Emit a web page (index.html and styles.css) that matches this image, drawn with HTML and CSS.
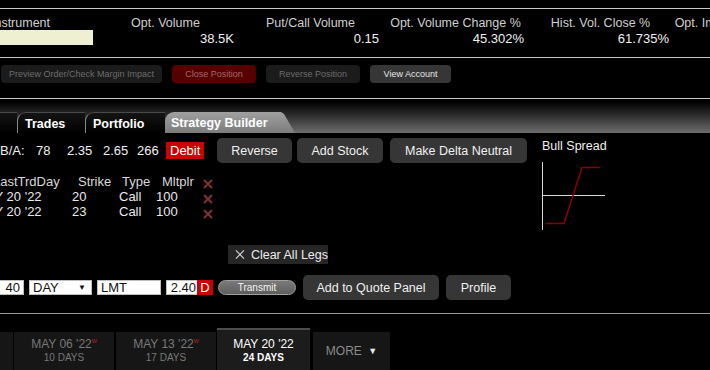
FILE: index.html
```html
<!DOCTYPE html>
<html lang="en">
<head>
    <meta charset="UTF-8">
    <meta name="viewport" content="width=device-width, initial-scale=1.0">
    <title>Strategy Builder</title>
    <link rel="stylesheet" href="styles.css">
</head>
<body>
<div class="page">

    <div class="rule first-rule"></div>

    <div class="stats">
        <div class="stat stat-first">
            <div class="stat-label">Instrument</div>
            <div class="instrument-box"></div>
        </div>
        <div class="stat">
            <div class="stat-label">Opt. Volume</div>
            <div class="stat-value">38.5K</div>
        </div>
        <div class="stat">
            <div class="stat-label">Put/Call Volume</div>
            <div class="stat-value">0.15</div>
        </div>
        <div class="stat">
            <div class="stat-label">Opt. Volume Change %</div>
            <div class="stat-value">45.302%</div>
        </div>
        <div class="stat">
            <div class="stat-label">Hist. Vol. Close %</div>
            <div class="stat-value">61.735%</div>
        </div>
        <div class="stat">
            <div class="stat-label">Opt. Implied Vol. Close %</div>
            <div class="stat-value"></div>
        </div>
    </div>

    <div class="rule"></div>

    <div class="actions">
        <button class="act-btn act-preview">Preview Order/Check Margin Impact</button>
        <button class="act-btn act-close">Close Position</button>
        <button class="act-btn act-reverse">Reverse Position</button>
        <button class="act-btn act-account">View Account</button>
    </div>

    <div class="rule"></div>

    <div class="tabbar">
        <div class="tab tab-stub"></div>
        <div class="tab tab-trades">Trades</div>
        <div class="tab tab-portfolio">Portfolio</div>
        <div class="tab tab-active">Strategy Builder</div>
    </div>

    <div class="builder">
        <div class="builder-main">

            <div class="summary-row">
                <div class="quote-line">
                    <span class="q q-label">B/A:</span>
                    <span class="q q-size">78</span>
                    <span class="q q-bid">2.35</span>
                    <span class="q q-ask">2.65</span>
                    <span class="q q-ask-size">266</span>
                    <span class="debit">Debit</span>
                </div>
                <button class="btn btn-reverse">Reverse</button>
                <button class="btn btn-stock">Add Stock</button>
                <button class="btn btn-delta">Make Delta Neutral</button>
            </div>

            <div class="legs">
                <div class="leg leg-head">
                    <span class="c-day">LastTrdDay</span>
                    <span class="c-strike">Strike</span>
                    <span class="c-type">Type</span>
                    <span class="c-mult">Mltplr</span>
                    <span class="c-x"><svg width="10" height="10" viewBox="0 0 10 10"><path d="M1 1 L9 9 M9 1 L1 9" stroke="#7e3434" stroke-width="2"/></svg></span>
                </div>
                <div class="leg">
                    <span class="c-day">MAY 20 '22</span>
                    <span class="c-strike">20</span>
                    <span class="c-type">Call</span>
                    <span class="c-mult">100</span>
                    <span class="c-x"><svg width="10" height="10" viewBox="0 0 10 10"><path d="M1 1 L9 9 M9 1 L1 9" stroke="#7e3434" stroke-width="2"/></svg></span>
                </div>
                <div class="leg">
                    <span class="c-day">MAY 20 '22</span>
                    <span class="c-strike">23</span>
                    <span class="c-type">Call</span>
                    <span class="c-mult">100</span>
                    <span class="c-x"><svg width="10" height="10" viewBox="0 0 10 10"><path d="M1 1 L9 9 M9 1 L1 9" stroke="#7e3434" stroke-width="2"/></svg></span>
                </div>
            </div>

            <div class="clear-row">
                <button class="clear-btn">
                    <svg width="11" height="11" viewBox="0 0 11 11"><path d="M1 1 L10 10 M10 1 L1 10" stroke="#d0d0d0" stroke-width="1.3"/></svg>
                    <span>Clear All Legs</span>
                </button>
            </div>

            <div class="order-row">
                <div class="field f-qty">40</div>
                <div class="field f-tif">DAY<span class="caret">&#9660;</span></div>
                <div class="field f-type">LMT</div>
                <div class="price">
                    <div class="field f-price">2.40</div>
                    <div class="price-flag">D</div>
                </div>
                <button class="transmit">Transmit</button>
                <button class="btn btn-quote">Add to Quote Panel</button>
                <button class="btn btn-profile">Profile</button>
            </div>
        </div>

        <div class="payoff">
            <div class="payoff-title">Bull Spread</div>
            <svg class="payoff-chart" width="70" height="70" viewBox="0 0 70 70">
                <path d="M2.5 2 V70" stroke="#d8d8d8" stroke-width="1"/>
                <path d="M2 35.5 H65" stroke="#d8d8d8" stroke-width="1"/>
                <polyline points="6,63.5 24,63.5 42,7.5 60,7.5" fill="none" stroke="#8b0000" stroke-width="1.5"/>
            </svg>
        </div>
    </div>

    <div class="rule rule-light"></div>

    <div class="expiries">
        <div class="exp exp-stub"></div>
        <div class="exp">
            <div class="exp-date">MAY 06 '22<sup>w</sup></div>
            <div class="exp-days">10 DAYS</div>
        </div>
        <div class="exp">
            <div class="exp-date">MAY 13 '22<sup>w</sup></div>
            <div class="exp-days">17 DAYS</div>
        </div>
        <div class="exp exp-active">
            <div class="exp-date">MAY 20 '22</div>
            <div class="exp-days">24 DAYS</div>
        </div>
        <div class="exp exp-more">MORE <span class="more-caret">&#9660;</span></div>
    </div>

</div>
</body>
</html>
```

FILE: styles.css
```css
body {
    margin: 0;
    background: #000;
    color: #e8e8e8;
    font-family: "Liberation Sans", Arial, sans-serif;
    overflow: hidden;
}
.page {
    width: 710px;
    height: 370px;
    overflow: hidden;
}
button {
    font-family: inherit;
    border: none;
    padding: 0;
    cursor: pointer;
}
.rule {
    height: 1px;
    background: #c8c8c8;
}
.first-rule {
    margin-top: 8px;
}
.rule-light {
    background: #9a9a9a;
}

/* quote stats */
.stats {
    display: flex;
    height: 48px;
    margin-left: -52px;
}
.stat {
    width: 145px;
    flex: none;
    padding-top: 8px;
}
.stat-label {
    height: 13px;
    line-height: 13px;
    font-size: 12.5px;
    color: #cfcfcf;
    text-align: center;
    white-space: nowrap;
}
.stat-value {
    margin-top: 1px;
    height: 15px;
    line-height: 15px;
    font-size: 13px;
    color: #f0f0f0;
    text-align: right;
    padding-right: 4px;
}
.instrument-box {
    margin: 0 0 0 4px;
    width: 141px;
    height: 15px;
    background: #efefd2;
}

/* action buttons */
.actions {
    height: 40px;
    box-sizing: border-box;
    padding-top: 7px;
    display: flex;
    gap: 10px;
}
.act-btn {
    height: 18px;
    border-radius: 4px;
    font-size: 9px;
    background: #1b1b1b;
    color: #6c6c6c;
}
.act-preview { width: 161px; margin-left: 1px; }
.act-close { width: 84px; background: #560000; color: #a36a6a; }
.act-reverse { width: 94px; }
.act-account { width: 81px; background: #363636; color: #e6e6e6; }

/* tabs */
.tabbar {
    height: 34px;
    display: flex;
    align-items: flex-end;
    background: linear-gradient(to bottom, #000 8%, #2a2a2a 45%, #6c6c6c 100%);
}
.tab {
    height: 21px;
    box-sizing: border-box;
    padding: 4px 0 0 7px;
    font-size: 12.5px;
    font-weight: bold;
    color: #fff;
    background: linear-gradient(to bottom, #141414, #000);
    border-left: 1px solid #8a8a8a;
    border-top: 1px solid #4a4a4a;
    border-top-left-radius: 9px;
    white-space: nowrap;
}
.tab-stub {
    width: 30px;
    margin-left: -13px;
}
.tab-trades { width: 68px; }
.tab-portfolio { width: 80px; }
.tab-active {
    width: 130px;
    padding-left: 6px;
    border: none;
    background: linear-gradient(to bottom, #a0a0a0, #7c7c7c);
    clip-path: polygon(0 0, 116px 0, 119px 2px, 100% 100%, 0 100%);
}

/* strategy builder */
.builder {
    display: flex;
    height: 180px;
}
.builder-main {
    width: 540px;
    flex: none;
}
.summary-row {
    display: flex;
    align-items: center;
    margin-top: 5px;
    height: 25px;
}
.quote-line {
    display: flex;
    align-items: center;
    font-size: 13px;
    color: #f0f0f0;
    width: 217px;
}
.q { display: inline-block; }
.q-label { width: 36px; }
.q-size { width: 31px; }
.q-bid { width: 36px; }
.q-ask { width: 34px; }
.q-ask-size { width: 29px; }
.debit {
    height: 17px;
    line-height: 17px;
    padding: 0 4px;
    background: #cc0000;
    color: #fff;
}
.btn {
    height: 25px;
    border-radius: 5px;
    background: #363636;
    color: #f0f0f0;
    font-size: 12.5px;
}
.btn-reverse { width: 75px; }
.btn-stock { width: 86px; margin-left: 5px; }
.btn-delta { width: 137px; margin-left: 7px; }

.legs {
    margin-top: 11px;
    font-size: 13px;
    color: #eaeaea;
}
.leg {
    display: flex;
    height: 15px;
    line-height: 15px;
    margin-left: -18px;
}
.leg span {
    display: block;
    flex: none;
    white-space: nowrap;
}
.c-day { width: 90px; }
.c-strike { width: 47px; }
.c-type { width: 37px; }
.c-mult { width: 47px; }
.c-x {
    width: 12px;
    padding-top: 3px;
}
.leg:not(.leg-head) .c-day {
    margin-left: -6px;
    width: 96px;
}
.leg-head .c-day { padding-left: 11px; width: 79px; }
.leg-head .c-strike { padding-left: 6px; width: 41px; }
.leg-head .c-type { padding-left: 3px; width: 34px; }
.leg-head .c-mult { padding-left: 6px; width: 41px; }
.leg-head { color: #d8d8d8; }

.clear-row {
    margin-top: 26px;
    padding-left: 228px;
}
.clear-btn {
    display: flex;
    align-items: center;
    gap: 6px;
    width: 100px;
    height: 19px;
    padding-left: 7px;
    background: #262626;
    color: #ececec;
    font-size: 12.5px;
    white-space: nowrap;
}

.order-row {
    display: flex;
    align-items: center;
    margin-top: 11px;
    height: 25px;
}
.field {
    height: 15px;
    box-sizing: border-box;
    line-height: 14px;
    background: #fff;
    border: 1px solid #bdbdbd;
    color: #111;
    font-size: 13px;
    padding: 0 3px;
}
.f-qty {
    width: 40px;
    margin-left: -16px;
    text-align: right;
}
.f-tif {
    width: 63px;
    margin-left: 5px;
    display: flex;
    justify-content: space-between;
}
.caret {
    font-size: 8px;
    line-height: 14px;
    padding-right: 2px;
}
.f-type {
    width: 64px;
    margin-left: 5px;
}
.price {
    display: flex;
    margin-left: 5px;
}
.f-price {
    width: 31px;
    padding: 0 1px 0 0;
    text-align: right;
    border-right: none;
}
.price-flag {
    width: 16px;
    height: 15px;
    line-height: 15px;
    text-align: center;
    background: #cc0000;
    color: #fff;
    font-size: 13px;
}
.transmit {
    width: 78px;
    height: 15px;
    margin-left: 5px;
    border-radius: 8px;
    background: linear-gradient(to bottom, #7a7a7a, #5e5e5e);
    border: 1px solid #a0a0a0;
    color: #f4f4f4;
    font-size: 10px;
    line-height: 12px;
}
.btn-quote { width: 136px; margin-left: 7px; }
.btn-profile { width: 65px; margin-left: 7px; }

.payoff {
    padding-left: 2px;
}
.payoff-title {
    margin-top: 6px;
    font-size: 12.5px;
    color: #f0f0f0;
    height: 21px;
    line-height: 15px;
}
.payoff-chart {
    display: block;
    margin-left: -2px;
}

/* expiry tabs */
.expiries {
    display: flex;
    align-items: flex-end;
    height: 56px;
    gap: 2px;
}
.exp {
    width: 100px;
    height: 38px;
    box-sizing: border-box;
    background: #161616;
    text-align: center;
    color: #787878;
    padding-top: 6px;
}
.exp-stub {
    width: 13px;
    margin-right: -1px;
}
.exp-date {
    font-size: 12px;
    line-height: 13px;
    white-space: nowrap;
}
.exp-date sup {
    font-size: 7px;
    color: #b02020;
    vertical-align: 5px;
    line-height: 0;
}
.exp-days {
    font-size: 10px;
    line-height: 11px;
    margin-top: 1px;
}
.exp-active {
    width: 93px;
    height: 42px;
    margin-left: -1px;
    background: #1c1c1c;
    border-top: 2px solid #4e4e4e;
    color: #fff;
    padding-top: 8px;
}
.exp-active .exp-days {
    font-weight: bold;
}
.exp-more {
    width: 77px;
    margin-left: 1px;
    padding-top: 12px;
    font-size: 12px;
    color: #8a8a8a;
}
.more-caret {
    font-size: 9px;
    color: #e8e8e8;
    margin-left: 3px;
    vertical-align: 1px;
}
```
